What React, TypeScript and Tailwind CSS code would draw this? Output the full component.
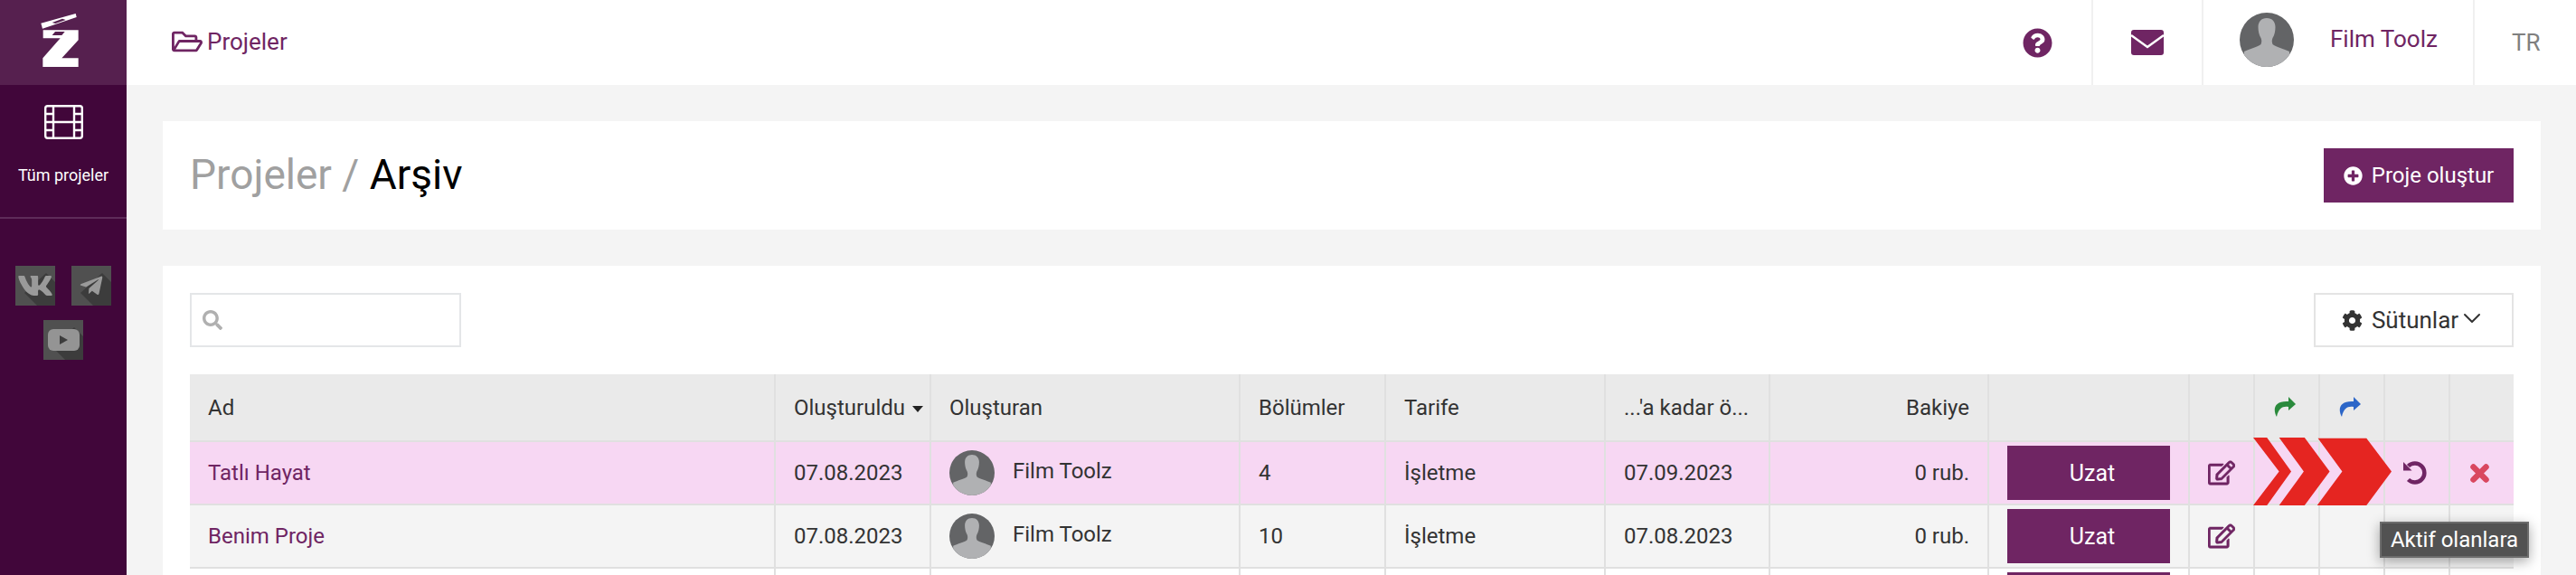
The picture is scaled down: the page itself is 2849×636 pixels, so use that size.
import {
  FaCog,
  FaPlusCircle,
  FaQuestionCircle,
  FaRegEdit,
  FaRegFolderOpen,
  FaSearch,
  FaTelegramPlane,
  FaVk,
} from 'react-icons/fa';
import { ChevronDown } from 'lucide-react';

const FONT = 'font-["Roboto","Liberation_Sans",sans-serif]';

const rows = [
  { name: 'Tatlı Hayat', created: '07.08.2023', parts: '4', until: '07.09.2023', bg: 'bg-[#f7d7f3]', hl: true },
  { name: 'Benim Proje', created: '07.08.2023', parts: '10', until: '07.08.2023', bg: 'bg-[#f4f4f4]', hl: false },
];

function Avatar({ className }: { className: string }) {
  return (
    <svg viewBox="0 0 60 60" className={className}>
      <defs>
        <clipPath id="avatar-clip">
          <circle cx="30" cy="30" r="30" />
        </clipPath>
      </defs>
      <g clipPath="url(#avatar-clip)">
        <rect width="60" height="60" fill="#636466" />
        <path
          d="M30 6c-6 0-9.500 4-9.500 10 0 4 1 9 3 12 1 2 1 5 0 7-3 3-13 5-18.500 8v17h50V43c-5.500-3-15.500-5-18.500-8-1-2-1-5 0-7 2-3 3-8 3-12 0-6-3.500-10-9.500-10z"
          fill="#b0b1b3"
        />
      </g>
    </svg>
  );
}

function Logo() {
  return (
    <svg viewBox="0 0 210 240" className="w-[70px] h-[80px]">
      <path fill="#fff" d="M31 62 146 30l3 12L36 80z" />
      <path fill="#56204f" d="M68 60 102 47l11 4-34 12z" />
      <path fill="#fff" d="M38 85h117v33l-55 60h55v29H37v-29l58-66H38z" />
      <path fill="#56204f" d="M68 102l10-12h32l-10 12z" />
    </svg>
  );
}

function FilmIcon() {
  return (
    <svg viewBox="0 0 43 38" className="w-[43px] h-[38px]" fill="none" stroke="#fff" strokeWidth="2.400">
      <rect x="1.200" y="1.200" width="40.600" height="35.600" rx="2.500" />
      <path d="M10 1v36M33 1v36M10 19h23M1 10h9M1 19h9M1 28h9M33 10h9M33 19h9M33 28h9" />
    </svg>
  );
}

function Social({ children, className }: { children: React.ReactNode; className?: string }) {
  return (
    <div className={`relative w-[44px] h-[44px] bg-[#505050] flex items-center justify-center overflow-hidden ${className ?? ''}`}>
      <svg viewBox="0 0 44 44" className="absolute inset-0 w-full h-full">
        <path d="M10 30 24 44h20V18L34 8z" fill="#3c3c3c" />
      </svg>
      <span className="relative flex">{children}</span>
    </div>
  );
}

function ShareIcon({ color }: { color: string }) {
  return (
    <svg viewBox="0 0 24 22" className="w-[24px] h-[22px] -ml-[4px]" fill={color}>
      <path d="M16 0l8 8-8 7v-4C10 10 5 12 3 22-2 13 1 4 16 5z" />
    </svg>
  );
}

function Th({ children, className }: { children?: React.ReactNode; className?: string }) {
  return (
    <th className={`border-r-2 border-b-2 border-[#e0e0e0] last:border-r-0 px-[20px] font-normal text-left ${className ?? ''}`}>
      {children}
    </th>
  );
}

function Td({ children, className }: { children?: React.ReactNode; className?: string }) {
  return (
    <td className={`border-r-2 border-b-2 border-[#e0e0e0] last:border-r-0 px-[20px] ${className ?? ''}`}>
      {children}
    </td>
  );
}

export default function App() {
  return (
    <div className={`${FONT} flex w-[2849px] h-[636px] overflow-hidden bg-[#f4f4f4] text-[24px] text-[#333]`}>
      <aside className="w-[140px] shrink-0 bg-[#41063a] flex flex-col items-center">
        <div className="w-full h-[94px] bg-[#56204f] flex items-center justify-center pb-[4px]">
          <Logo />
        </div>
        <div className="w-full h-[148px] border-b-2 border-[#5e2b59] flex flex-col items-center pt-[22px]">
          <FilmIcon />
          <span className="mt-[26px] text-[18px] leading-[28px] text-white">Tüm projeler</span>
        </div>
        <div className="mt-[52px] flex gap-[18px]">
          <Social>
            <FaVk className="text-[40px] text-[#9a9a9a]" />
          </Social>
          <Social>
            <FaTelegramPlane className="text-[28px] text-[#9a9a9a]" />
          </Social>
        </div>
        <Social className="mt-[16px]">
          <svg viewBox="0 0 35 24" className="w-[35px] h-[24px]">
            <rect width="35" height="24" rx="6" fill="#949494" />
            <path d="M13 7l9 5-9 5z" fill="#3c3c3c" />
          </svg>
        </Social>
      </aside>

      <div className="flex-1 min-w-0 flex flex-col">
        <header className="h-[94px] shrink-0 bg-white flex items-stretch">
          <div className="flex items-center gap-[5px] pl-[50px] pb-[2px] text-[#6f2563] text-[26px] flex-1">
            <FaRegFolderOpen className="text-[34px]" />
            <span>Projeler</span>
          </div>
          <div className="w-[175px] flex items-center justify-center pl-[54px] border-r-2 border-[#f0f0f0]">
            <FaQuestionCircle className="text-[33px] text-[#6f2563]" />
          </div>
          <div className="w-[122px] flex items-center justify-center border-r-2 border-[#f0f0f0]">
            <svg viewBox="0 0 36 28" className="w-[36px] h-[28px]">
              <rect width="36" height="28" rx="3" fill="#6f2563" />
              <path d="M0 6l18 13L36 6" fill="none" stroke="#fff" strokeWidth="2.500" />
            </svg>
          </div>
          <div className="w-[300px] flex items-center gap-[40px] pl-[40px] border-r-2 border-[#f0f0f0]">
            <Avatar className="w-[60px] h-[60px] -mt-[6px]" />
            <span className="text-[#6f2563] text-[26px] -mt-[8px]">Film Toolz</span>
          </div>
          <div className="w-[112px] flex items-center pl-[41px] text-[#808080] text-[26px]">TR</div>
        </header>

        <main className="flex-1 min-h-0 pl-[40px] pr-[39px]">
          <section className="mt-[40px] h-[120px] bg-white flex items-center justify-between pl-[30px] pr-[30px]">
            <h1 className="text-[46px] text-[#a0a0a0] -mt-[2px]">
              Projeler / <span className="text-black">Arşiv</span>
            </h1>
            <button className="w-[210px] h-[60px] bg-[#6f2563] text-white text-[24px] flex items-center justify-center gap-[10px]">
              <FaPlusCircle className="text-[21px]" />
              Proje oluştur
            </button>
          </section>

          <section className="mt-[40px] bg-white h-[400px] px-[30px] pt-[30px]">
            <div className="flex items-center justify-between">
              <div className="w-[300px] h-[60px] border-2 border-[#e4e6e8] flex items-center pl-[12px]">
                <FaSearch className="text-[22px] text-[#b0b0b0]" />
              </div>
              <button className="w-[221px] h-[60px] border-2 border-[#e4e4e4] bg-white flex items-center justify-center text-[#333] text-[26px]">
                <FaCog className="text-[23px] mr-[10px]" />
                <span>Sütunlar</span>
                <ChevronDown strokeWidth={1.500} className="w-[32px] h-[32px] -mx-[1px] -mt-[4px]" />
              </button>
            </div>

            <div className="relative mt-[30px]">
              <table className="w-[2570px] table-fixed border-collapse text-[24px] leading-none">
                <colgroup>
                  <col className="w-[647px]" />
                  <col className="w-[172px]" />
                  <col className="w-[342px]" />
                  <col className="w-[161px]" />
                  <col className="w-[243px]" />
                  <col className="w-[182px]" />
                  <col className="w-[242px]" />
                  <col className="w-[222px]" />
                  <col className="w-[72px]" />
                  <col className="w-[72px]" />
                  <col className="w-[72px]" />
                  <col className="w-[72px]" />
                  <col className="w-[71px]" />
                </colgroup>
                <thead>
                  <tr className="h-[74px] bg-[#eaeaea]">
                    <Th>Ad</Th>
                    <Th className="whitespace-nowrap !pr-0">
                      Oluşturuldu
                      <span className="inline-block ml-[8px] mb-[3px] w-0 h-0 border-x-[6px] border-t-[7px] border-x-transparent border-t-[#222]" />
                    </Th>
                    <Th>Oluşturan</Th>
                    <Th>Bölümler</Th>
                    <Th>Tarife</Th>
                    <Th>...'a kadar ö...</Th>
                    <Th className="text-right">Bakiye</Th>
                    <Th />
                    <Th />
                    <Th className="!px-0">
                      <div className="flex justify-center -mt-[2px]"><ShareIcon color="#2a8a3c" /></div>
                    </Th>
                    <Th className="!px-0">
                      <div className="flex justify-center -mt-[2px]"><ShareIcon color="#2c66c8" /></div>
                    </Th>
                    <Th />
                    <Th />
                  </tr>
                </thead>
                <tbody>
                  {rows.map((row) => (
                    <tr key={row.name} className={`h-[70px] ${row.bg}`}>
                      <Td className="text-[#6f2563]">{row.name}</Td>
                      <Td>{row.created}</Td>
                      <Td>
                        <div className="flex items-center gap-[20px]">
                          <Avatar className="w-[50px] h-[50px]" />
                          <span className="-mt-[4px]">Film Toolz</span>
                        </div>
                      </Td>
                      <Td>{row.parts}</Td>
                      <Td>İşletme</Td>
                      <Td>{row.until}</Td>
                      <Td className="text-right">0 rub.</Td>
                      <Td className="!px-[20px]">
                        <button className="w-[180px] h-[60px] pl-[8px] bg-[#6f2563] text-white text-[25px]">Uzat</button>
                      </Td>
                      <Td className="!px-0">
                        <div className="flex justify-center">
                          <FaRegEdit className="text-[30px] text-[#6f2563] stroke-[10]" />
                        </div>
                      </Td>
                      <Td />
                      <Td />
                      <Td className="!px-0">
                        {row.hl && (
                          <div className="flex justify-center">
                            <svg viewBox="0 0 26 26" className="w-[26px] h-[26px] -ml-[4px]">
                              <path d="M5.500 5.500A10.500 10.500 0 1 1 5.500 20.500" fill="none" stroke="#6f2563" strokeWidth="4.500" />
                              <path d="M0 1v9.500h9.500z" fill="#6f2563" />
                            </svg>
                          </div>
                        )}
                      </Td>
                      <Td className="!px-0">
                        {row.hl && (
                          <div className="flex justify-center">
                            <svg viewBox="0 0 21 21" className="w-[21px] h-[21px] -ml-[6px]">
                              <path d="M3.500 3.500l14 14M17.500 3.500l-14 14" stroke="#d9475f" strokeWidth="6.500" strokeLinecap="round" />
                            </svg>
                          </div>
                        )}
                      </Td>
                    </tr>
                  ))}
                  <tr className="h-[70px] bg-white">
                    <Td />
                    <Td />
                    <Td />
                    <Td />
                    <Td />
                    <Td />
                    <Td />
                    <Td className="align-top pt-[4px]">
                      <div className="w-[180px] h-[60px] bg-[#6f2563]" />
                    </Td>
                    <Td />
                    <Td />
                    <Td />
                    <Td />
                    <Td />
                  </tr>
                </tbody>
              </table>

              <svg
                viewBox="768 552 342 224"
                preserveAspectRatio="none"
                className="absolute left-[2282px] top-[70px] w-[153px] h-[75px] z-10"
                fill="#e52521"
              >
                <path d="M768 552h34l60 112-60 112h-34l64-112z" />
                <path d="M832 552h63l62 112-62 112h-63l61-112z" />
                <path d="M928 554h120l62 110-62 112H926l62-112z" />
              </svg>

              <div className="absolute left-[2422px] top-[163px] w-[165px] h-[40px] bg-[#525252] border-2 border-[#6c6c6c] text-white text-[24px] flex items-center justify-center whitespace-nowrap shadow-[0_4px_14px_rgba(0,0,0,0.35)] z-20">
                Aktif olanlara
              </div>
            </div>
          </section>
        </main>
      </div>
    </div>
  );
}
